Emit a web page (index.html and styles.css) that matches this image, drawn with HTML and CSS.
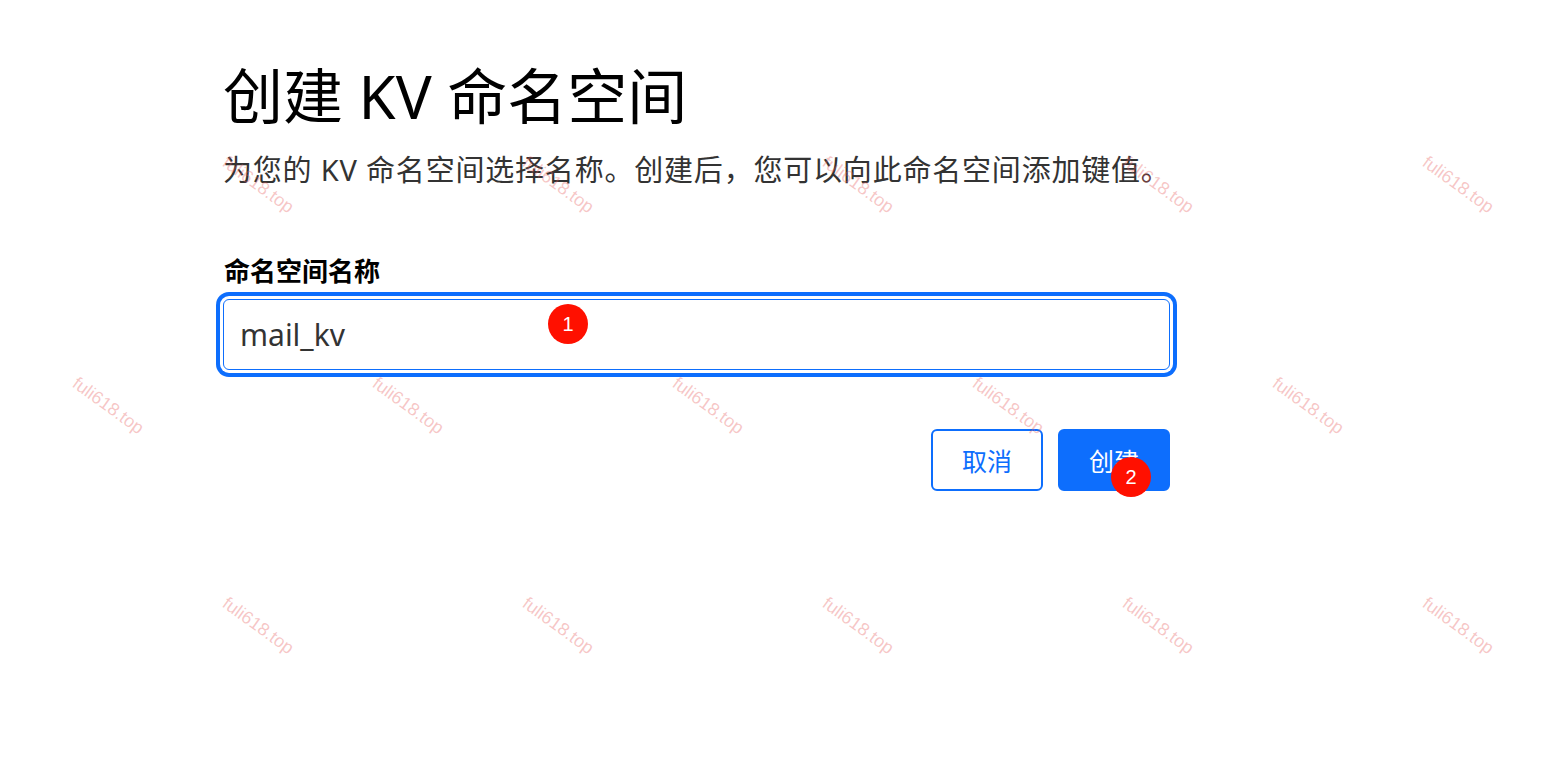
FILE: index.html
```html
<!DOCTYPE html>
<html lang="zh-CN">
<head>
<meta charset="utf-8">
<title>创建 KV 命名空间</title>
<link rel="stylesheet" href="styles.css">
</head>
<body>
<main class="page">
  <h1 class="title">创建 KV 命名空间</h1>
  <p class="subtitle">为您的 KV 命名空间选择名称。创建后，您可以向此命名空间添加键值。</p>
  <form class="form">
    <label class="label" for="ns">命名空间名称</label>
    <div class="field">
      <input class="input" id="ns" type="text" value="mail_kv">
      <span class="badge badge-1">1</span>
    </div>
    <div class="actions">
      <button type="button" class="btn btn-outline">取消</button>
      <div class="btn-wrap">
        <button type="button" class="btn btn-primary">创建</button>
        <span class="badge badge-2">2</span>
      </div>
    </div>
  </form>
</main>
<div class="watermarks" aria-hidden="true">
  <span class="wm" style="left:258px;top:185px">fuli618.top</span>
  <span class="wm" style="left:558px;top:185px">fuli618.top</span>
  <span class="wm" style="left:858px;top:185px">fuli618.top</span>
  <span class="wm" style="left:1158px;top:185px">fuli618.top</span>
  <span class="wm" style="left:1458px;top:185px">fuli618.top</span>
  <span class="wm" style="left:108px;top:406px">fuli618.top</span>
  <span class="wm" style="left:408px;top:406px">fuli618.top</span>
  <span class="wm" style="left:708px;top:406px">fuli618.top</span>
  <span class="wm" style="left:1008px;top:406px">fuli618.top</span>
  <span class="wm" style="left:1308px;top:406px">fuli618.top</span>
  <span class="wm" style="left:258px;top:626px">fuli618.top</span>
  <span class="wm" style="left:558px;top:626px">fuli618.top</span>
  <span class="wm" style="left:858px;top:626px">fuli618.top</span>
  <span class="wm" style="left:1158px;top:626px">fuli618.top</span>
  <span class="wm" style="left:1458px;top:626px">fuli618.top</span>
</div>
</body>
</html>
```
FILE: styles.css
```css
* { box-sizing: border-box; }
html, body {
  margin: 0;
  padding: 0;
  background: #fff;
  width: 1544px;
  height: 783px;
  overflow: hidden;
}
body {
  font-family: "Noto Sans", "Noto Sans CJK SC", sans-serif;
  color: #333;
  position: relative;
}
.page {
  width: 947px;
  margin-left: 223px;
  padding-top: 60px;
}
.title {
  margin: 0;
  font-size: 60px;
  line-height: 72px;
  font-weight: 400;
  color: #000;
  letter-spacing: 0;
}
.subtitle {
  margin: 17px 0 0;
  font-size: 29px;
  line-height: 42px;
  color: #333;
  white-space: nowrap;
  letter-spacing: 0.8px;
}
.form {
  margin-top: 63px;
  display: flex;
  flex-direction: column;
}
.label {
  font-size: 26px;
  line-height: 35px;
  font-weight: 700;
  color: #000;
  padding-left: 1px;
}
.field {
  position: relative;
  margin-top: 10px;
}
.input {
  display: block;
  width: 947px;
  height: 71px;
  border: 1px solid #0d6efd;
  border-radius: 6px;
  padding: 0 16px;
  font-family: "Noto Sans", "Noto Sans CJK SC", sans-serif;
  font-size: 30px;
  color: #333;
  background: #fff;
  outline: none;
  box-shadow: 0 0 0 3px #fff, 0 0 0 7px #0d6efd;
}
.badge {
  position: absolute;
  width: 40px;
  height: 40px;
  border-radius: 50%;
  background: #ff1000;
  color: #fff;
  font-family: "Liberation Sans", Arial, sans-serif;
  font-size: 20px;
  display: flex;
  align-items: center;
  justify-content: center;
}
.badge-1 { left: 325px; top: 5px; }
.actions {
  margin-top: 59px;
  display: flex;
  justify-content: flex-end;
  gap: 15px;
}
.btn-wrap { position: relative; }
.btn {
  width: 112px;
  height: 62px;
  border-radius: 6px;
  font-family: "Noto Sans", "Noto Sans CJK SC", sans-serif;
  font-size: 25px;
  cursor: pointer;
  display: flex;
  align-items: center;
  justify-content: center;
  padding: 0;
}
.btn-outline {
  background: #fff;
  color: #0d6efd;
  border: 2px solid #0d6efd;
}
.btn-primary {
  background: #0d6efd;
  color: #fff;
  border: 2px solid #0d6efd;
}
.badge-2 { left: 53px; top: 28px; }
.watermarks {
  position: absolute;
  inset: 0;
  pointer-events: none;
  overflow: hidden;
}
.wm {
  position: absolute;
  font-family: "Liberation Sans", Arial, sans-serif;
  font-size: 18px;
  color: rgba(230, 90, 90, 0.35);
  white-space: nowrap;
  transform: translate(-50%, -50%) rotate(36deg);
}
```
